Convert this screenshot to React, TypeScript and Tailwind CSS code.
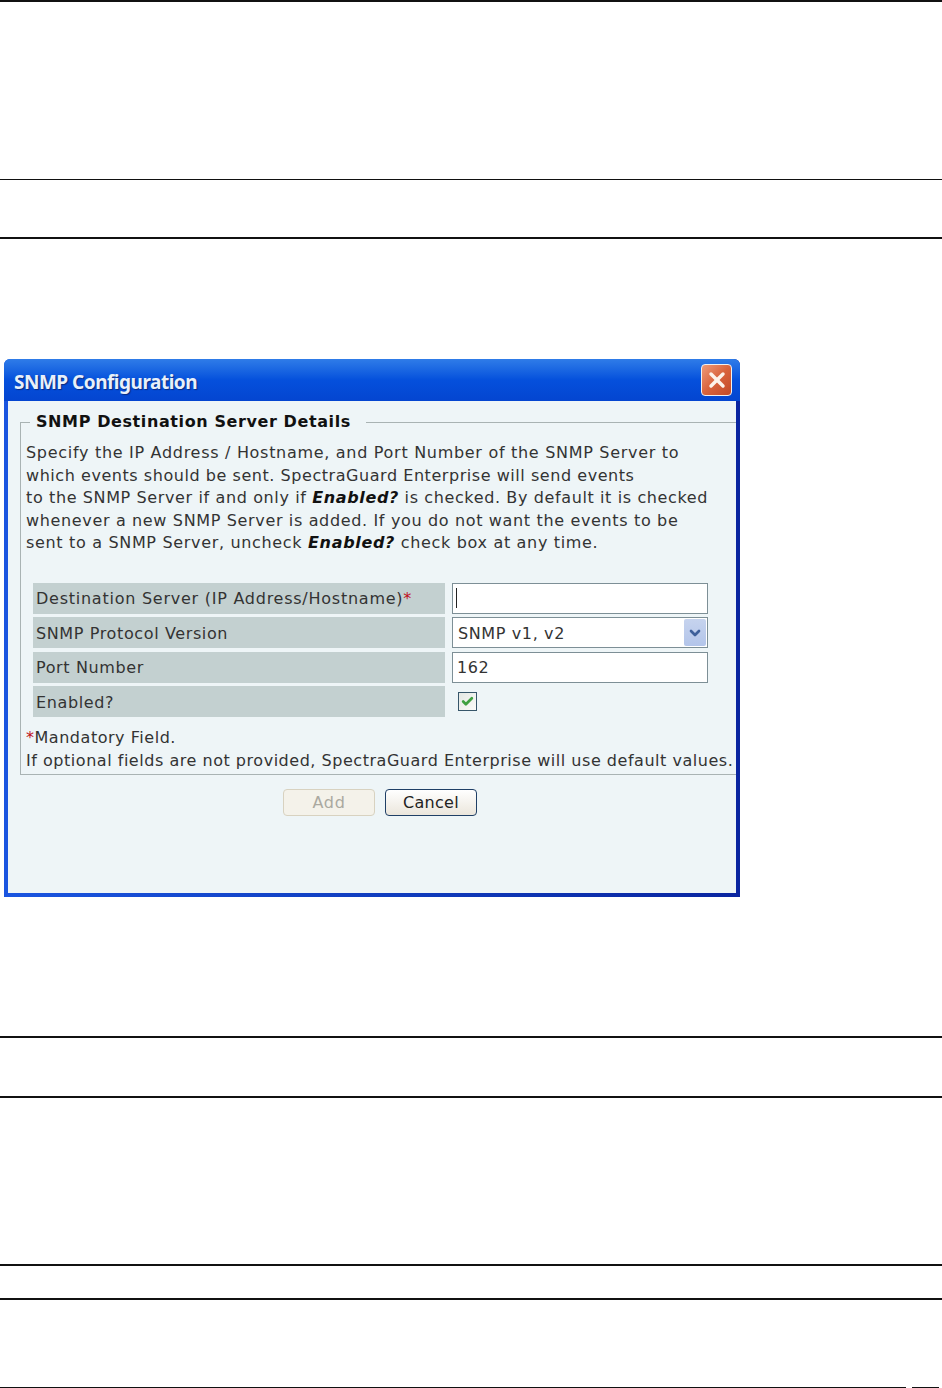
import { Check, ChevronDown, X } from "lucide-react";

const dejavu = "font-['DejaVu_Sans',sans-serif]";

function Rule({ className }: { className: string }) {
  return <div className={`h-[1.5px] bg-[#111] ${className}`} />;
}

function Row({ label, required, children }: { label: string; required?: boolean; children: React.ReactNode }) {
  return (
    <div className="flex h-[31px] gap-[7px]">
      <div className="flex w-[412px] items-center bg-[#c3d0d0] pt-[2px] pl-[3px] text-[#333]">
        <span className={required ? "tracking-[0.75px]" : ""}>
          {label}
          {required && <span className="text-[#c01020]">*</span>}
        </span>
      </div>
      <div className="flex w-[256px] items-center">{children}</div>
    </div>
  );
}

function Field({ children }: { children?: React.ReactNode }) {
  return (
    <div className="flex h-[31px] w-full items-center border border-[#7d8f96] bg-white pl-[5px] text-[#333]">
      {children}
    </div>
  );
}

export default function App() {
  return (
    <div className={`h-[1388px] w-[942px] overflow-hidden bg-white ${dejavu}`}>
      <Rule className="" />
      <Rule className="mt-[177px]" />
      <div className="mt-[57px] h-[2px] bg-[#111]" />

      <div className="mt-[120px] ml-[4px] flex h-[538px] w-[736px] flex-col overflow-hidden rounded-t-[6px] bg-gradient-to-r from-[#1a55e0] to-[#0a25a0]">
        <div className="flex h-[42px] items-center justify-between bg-gradient-to-b from-[#2f7ce8] via-[#0550dc] to-[#0445d0] pr-[8px] pl-[10px]">
          <span className="mt-[4px] font-['Noto_Sans',sans-serif] text-[19px] font-bold tracking-[-0.5px] text-[#e8f0fa] [text-shadow:1px_1px_1px_#0a2a80]">
            SNMP Configuration
          </span>
          <button className="flex h-[32px] w-[31px] items-center justify-center rounded-[4px] border border-[#f0f0f0] bg-gradient-to-br from-[#ee9a78] via-[#d9633c] to-[#c24a28]">
            <X size={24} strokeWidth={3.5} className="text-[#fdf3ea]" />
          </button>
        </div>

        <div className="mx-[4px] mb-[4px] flex flex-1 flex-col bg-[#eef5f7] text-[16px] tracking-[0.62px] text-[#333]">
          <fieldset className="mt-[11px] ml-[12px] h-[363px] border-t border-b border-l border-[#a9b3b3] pl-[5px]">
            <legend className="ml-[4px] pr-[15px] pl-[6px] text-[16px] leading-[20px] font-bold tracking-[0.6px] text-[#111]">
              SNMP Destination Server Details
            </legend>
            <p className="mt-[10px] leading-[22.5px] whitespace-nowrap">
              <span className="tracking-[0.7px]">Specify the IP Address / Hostname, and Port Number of the SNMP Server to</span>
              <br />
              <span className="tracking-[0.55px]">which events should be sent. SpectraGuard Enterprise will send events</span>
              <br />
              to the SNMP Server if and only if <b className="text-[#111] italic">Enabled?</b> is checked. By default it is checked
              <br />
              <span className="tracking-[0.65px]">whenever a new SNMP Server is added. If you do not want the events to be</span>
              <br />
              <span className="tracking-[0.67px]">sent to a SNMP Server, uncheck <b className="text-[#111] italic">Enabled?</b> check box at any time.</span>
            </p>

            <div className="mt-[28px] ml-[7px] flex flex-col gap-[3.5px]">
              <Row label="Destination Server (IP Address/Hostname)" required>
                <Field>
                  <span className="-ml-[2px] h-[20px] w-px bg-[#222]" />
                </Field>
              </Row>
              <Row label="SNMP Protocol Version">
                <Field>
                  <span className="flex-1 pt-[2px]">SNMP v1, v2</span>
                  <span className="mr-px flex h-[27px] w-[22px] items-center justify-center rounded-[2px] bg-gradient-to-b from-[#c6d3ee] to-[#b3c5ea]">
                    <ChevronDown size={16} strokeWidth={4} className="text-[#3d5f9a]" />
                  </span>
                </Field>
              </Row>
              <Row label="Port Number">
                <Field>
                  <span className="-ml-px pt-[2px]">162</span>
                </Field>
              </Row>
              <Row label="Enabled?">
                <span className="ml-[6px] flex h-[19px] w-[19px] items-center justify-center border border-[#37566a] bg-gradient-to-br from-[#e4e8e4] to-[#fbfbf8]">
                  <Check size={13} strokeWidth={5} className="text-[#3fa040]" />
                </span>
              </Row>
            </div>

            <p className="mt-[9px] leading-[23px] tracking-[0.53px] whitespace-nowrap">
              <span className="text-[#c01020]">*</span>Mandatory Field.
              <br />
              If optional fields are not provided, SpectraGuard Enterprise will use default values.
            </p>
          </fieldset>

          <div className="mt-[14px] ml-[275px] flex gap-[10px]">
            <button className="h-[27px] w-[92px] rounded-[4px] border border-[#d8d2c0] bg-[#f4f2ea] pt-px text-[#aaa9a0]">Add</button>
            <button className="h-[27px] w-[92px] rounded-[4px] border border-[#1f3f66] bg-gradient-to-b from-white to-[#ebe6dc] pt-px tracking-[0.3px] text-[#222]">Cancel</button>
          </div>
        </div>
      </div>

      <div className="mt-[139px] h-[2px] bg-[#111]" />
      <div className="mt-[58px] h-[2px] bg-[#111]" />
      <div className="mt-[166px] h-[2px] bg-[#111]" />
      <div className="mt-[32px] h-[2px] bg-[#111]" />

      <div className="mt-[87px] flex gap-[6px]">
        <Rule className="w-[906px]" />
        <Rule className="w-[27px]" />
      </div>
    </div>
  );
}
